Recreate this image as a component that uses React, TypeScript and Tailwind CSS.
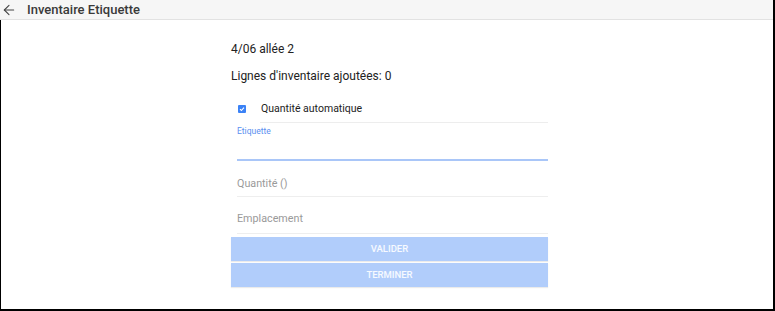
import { ArrowLeft } from "lucide-react"

export default function App() {
  return (
    <div className="h-[311px] w-[775px] overflow-hidden bg-white font-['Roboto',sans-serif]">
      <div className="flex h-full flex-col border-r-2 border-black">
        {/* Header */}
        <div className="flex h-[20px] shrink-0 items-center border-b border-[#e2e2e2] bg-[#f6f6f6]">
          <ArrowLeft className="ml-px h-4 w-4 text-[#444]" strokeWidth={1.6} />
          <span className="ml-[10px] text-[13px] font-medium text-[#3a3a3a]">Inventaire Etiquette</span>
        </div>

        <div className="flex flex-1 border-b-2 border-l border-black pl-[230px]">
          <div className="w-[317px] pt-[20px]">
            <p className="h-[18px] text-[12px] leading-[18px] text-[#222]">4/06 allée 2</p>
            <p className="mt-[9px] h-[18px] text-[12px] leading-[18px] text-[#222]">
              Lignes d'inventaire ajoutées: 0
            </p>

            <div className="mt-[14px] flex h-[20px] items-center">
              <span className="ml-[7px] flex h-[8px] w-[8px] items-center justify-center rounded-[1px] bg-[#3b82f6]">
                <svg viewBox="0 0 8 8" className="h-[8px] w-[8px]">
                  <path d="M2 4.2 3.4 5.5 6 2.6" fill="none" stroke="white" strokeWidth="1.1" />
                </svg>
              </span>
              <span className="ml-[15px] text-[10.5px] text-[#222]">Quantité automatique</span>
            </div>
            <div className="ml-[29px] mt-[3px] h-px bg-[#ededed]" />

            <div className="ml-[6px]">
              <div className="h-[38px] border-b-2 border-[#a9c6f8] pt-[3px]">
                <span className="block text-[8.5px] leading-[10px] text-[#5b8ff0]">Etiquette</span>
              </div>
              <div className="flex h-[36px] items-center border-b border-[#eeeeee] pt-[12px]">
                <span className="text-[10.75px] text-[#9a9a9a]">Quantité ()</span>
              </div>
              <div className="flex h-[37px] items-center border-b border-[#eeeeee] pt-[9px]">
                <span className="text-[10.75px] text-[#9a9a9a]">Emplacement</span>
              </div>
            </div>

            <div className="mt-[3px] flex flex-col gap-[2px]">
              <button className="h-[24px] bg-[#b1cdfb] text-[9.5px] font-medium uppercase text-white/90 shadow-[0_1px_1px_rgba(0,0,0,0.08)]">
                Valider
              </button>
              <button className="h-[24px] bg-[#b1cdfb] text-[9.5px] font-medium uppercase text-white/90 shadow-[0_1px_1px_rgba(0,0,0,0.08)]">
                Terminer
              </button>
            </div>
          </div>
        </div>
      </div>
    </div>
  )
}
